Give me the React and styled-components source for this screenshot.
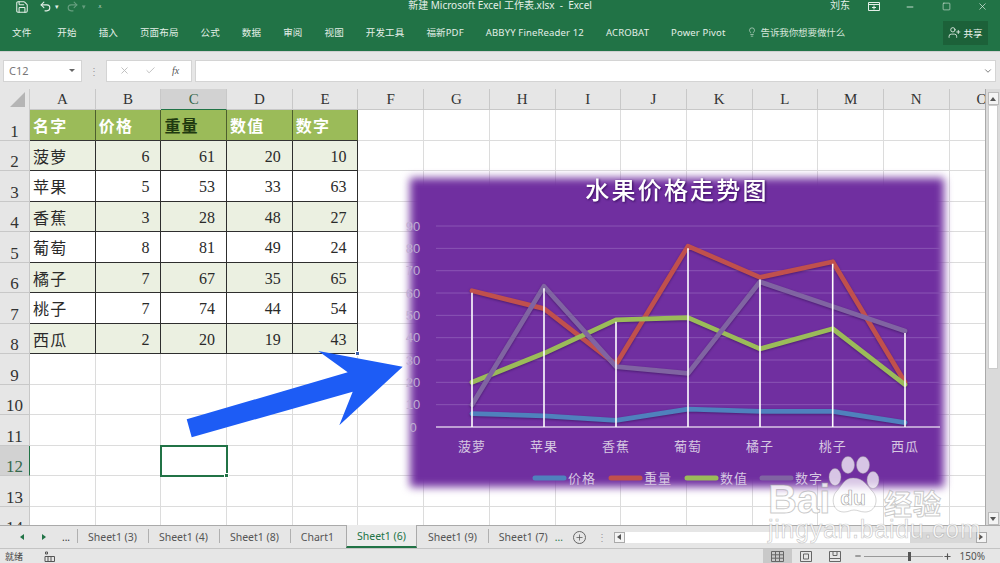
import React from 'react';
import styled, { createGlobalStyle } from 'styled-components';
import { Save, Undo2, Redo2, Lightbulb, UserPlus, X, Minus, Square, Check, ChevronDown, Plus } from 'lucide-react';

const UI = '"Noto Sans","Noto Sans CJK SC",sans-serif';
const SHEET = '"Liberation Serif","Noto Sans CJK SC",serif';
const green = '#217346';

const Global = createGlobalStyle`
  html, body { margin: 0; padding: 0; background: #fff; }
  * { box-sizing: border-box; }
`;
const Page = styled.div`
  position: relative; width: 1000px; height: 563px; overflow: hidden;
  display: flex; flex-direction: column; font-family: ${UI}; background: #e6e6e6;
`;
const Ribbon = styled.header`
  height: 52px; background: ${green}; color: #e4efe8; display: flex; flex-direction: column;
  border-bottom: 1px solid #d0d0d0;
`;
const TitleRow = styled.div`
  height: 13px; display: grid; grid-template-columns: 1fr auto 1fr; align-items: center; font-size: 10px;
`;
const Qat = styled.div`
  display: flex; align-items: center; padding-left: 15px; gap: 2px; height: 13px;
`;
const QatBtn = styled.span`
  display: inline-flex; align-items: center; justify-content: center; height: 13px;
  width: ${p => p.$w || 14}px; margin-left: ${p => p.$ml || 0}px; opacity: ${p => p.$dim ? 0.35 : 1};
  font-size: 7px; line-height: 1;
`;
const Title = styled.div` white-space: pre; line-height: 10px; margin-bottom: 3px; `;
const WinControls = styled.div`
  display: flex; justify-content: flex-end; align-items: center; height: 13px;
`;
const User = styled.span` margin-right: 6px; line-height: 10px; margin-bottom: 3px; `;
const WinBtn = styled.span`
  width: 36px; display: inline-flex; justify-content: center; align-items: center;
`;
const TabRow = styled.nav`
  flex: 1; display: flex; align-items: center; padding: 0 12px; font-size: 9.5px; gap: 22px; white-space: nowrap; letter-spacing: 0.15px;
`;
const RibbonTab = styled.span`
  display: inline-block; margin-right: ${p => p.$mr || 0}px;
`;
const Tell = styled.span`
  display: inline-flex; align-items: center; gap: 3px; color: #d5e5da; letter-spacing: -0.1px;
`;
const Share = styled.button`
  margin-left: auto; width: 45px; height: 24px; margin-top: 1px; background: #1c6139; border: 0; color: #f0f6f2;
  font: 9.5px ${UI}; display: flex; align-items: center; justify-content: center; gap: 2px; padding: 0;
`;
const FormulaBar = styled.div`
  height: 37px; display: flex; align-items: center; padding: 0 4px 0 3px; background: #e6e6e6;
`;
const NameBox = styled.div`
  width: 79px; height: 22px; background: #fff; border: 1px solid #d4d4d4; display: flex; align-items: center; justify-content: space-between;
  padding: 0 3px 0 5px; font-size: 11px; color: #777;
`;
const Caret = styled.span`
  width: 0; height: 0; border-left: 3px solid transparent; border-right: 3px solid transparent; border-top: 3px solid #666; margin-right: 3px;
`;
const Grip = styled.span`
  width: 24px; text-align: center; color: #999; font-size: 10px; line-height: 1; flex: none; margin-left: ${p => p.$ml || 0}px;
`;
const FxBox = styled.div`
  width: 86px; height: 22px; background: #fff; border: 1px solid #d4d4d4; display: flex; align-items: center; justify-content: space-around; padding: 0 4px;
  color: #bbb;
`;
const Fx = styled.i` font: italic 10px "Liberation Serif", serif; color: #555; `;
const Input = styled.div`
  flex: 1; margin-left: 3px; height: 22px; background: #fff; border: 1px solid #d4d4d4; display: flex; align-items: center; justify-content: flex-end; padding-right: 2px; color: #666;
`;
const SheetWrap = styled.div` height: 437px; display: flex; background: #fff; border-bottom: 1px solid #aaa; `;
const Grid = styled.div`
  width: 985px; height: 436px; overflow: hidden; display: grid;
  grid-template-columns: 30px repeat(15, 65.7px);
  grid-template-rows: 21px repeat(14, 30.5px);
  font-family: ${SHEET}; font-size: 16px; color: #222;
`;
const Corner = styled.div`
  background: #e6e6e6; position: relative; border-right: 1px solid #ccc;
  &::after {
    content: ''; position: absolute; right: 4px; bottom: 3px; width: 0; height: 0;
    border-left: 15px solid transparent; border-bottom: 15px solid #b5b5b5;
  }
`;
const ColHead = styled.div`
  background: ${p => p.$on ? '#d2d2d2' : '#e6e6e6'}; border-right: 1px solid #c8c8c8;
  border-bottom: ${p => p.$on ? `1px solid ${green}` : '1px solid #c8c8c8'};
  display: flex; align-items: center; justify-content: center; font-size: 15px; color: ${p => p.$on ? '#37694c' : '#333'}; overflow: hidden; white-space: nowrap;
`;
const RowHead = styled.div`
  background: ${p => p.$on ? '#d2d2d2' : '#e6e6e6'}; border-bottom: 1px solid #c8c8c8;
  border-right: ${p => p.$on ? `1px solid ${green}` : '1px solid #c8c8c8'};
  display: flex; align-items: flex-end; justify-content: center; font-size: 17px; line-height: 1; padding-bottom: 0;
  color: ${p => p.$on ? '#37694c' : '#333'};
`;
const Cell = styled.div`
  position: relative; border-right: 1px solid #dcdcdc; border-bottom: 1px solid #dcdcdc;
`;
const DataCell = styled.div`
  background: ${p => p.$head ? '#9bbb59' : p.$band ? '#ebf0e1' : '#fff'};
  border-right: 1px solid ${p => p.$head ? '#4d5f2d' : '#2e2e2e'}; border-bottom: 1px solid ${p => p.$head ? '#333' : '#2e2e2e'};
  display: flex; align-items: center; justify-content: ${p => p.$num ? 'flex-end' : 'flex-start'};
  padding: ${p => p.$num ? '3px 11px 0 0' : '1px 0 0 3px'}; font-size: 16px; letter-spacing: ${p => p.$num ? 0 : '1.2px'};
  color: ${p => p.$head ? (p.$dark ? '#1f3a10' : '#fff') : '#2a2a2a'}; font-weight: ${p => p.$head ? 700 : 400}; position: relative;
`;
const Handle = styled.span`
  position: absolute; right: -3px; bottom: -3px; width: 5px; height: 5px; background: ${p => p.$c || green}; border: 1px solid #fff; z-index: 1;
`;
const Selected = styled(Cell)`
  outline: 2px solid ${green}; outline-offset: -1px; z-index: 1;
`;
const VScroll = styled.div`
  width: 15px; background: #dadada; border-left: 1px solid #aaa; display: flex; flex-direction: column; align-items: center; padding: 3px 0 0;
`;
const ScrollBtn = styled.div`
  width: 11px; height: 13px; background: #f4f4f4; border: 1px solid #bbb; display: flex; align-items: center; justify-content: center; flex: none;
`;
const Tri = styled.span`
  width: 0; height: 0; border: 3px solid transparent;
  ${p => p.$d === 'up' && 'border-bottom: 4px solid #555; border-top: 0;'}
  ${p => p.$d === 'down' && 'border-top: 4px solid #555; border-bottom: 0;'}
  ${p => p.$d === 'left' && `border-right: 4px solid ${p.$c || '#555'}; border-left: 0;`}
  ${p => p.$d === 'right' && `border-left: 4px solid ${p.$c || '#555'}; border-right: 0;`}
`;
const VThumb = styled.div` width: 10px; height: 264px; background: #fff; border: 1px solid #ccc; flex: none; `;
const VGap = styled.div` flex: 1; `;
const TabBar = styled.div`
  height: 22px; display: flex; align-items: center; font-size: 10.5px; color: #555; background: #e6e6e6;
`;
const NavStart = styled.span`
  width: 22px; display: flex; justify-content: center; flex: none; margin-left: ${p => p.$ml || 0}px;
`;
const NavDots = styled.span`
  width: ${p => p.$w || 22}px; text-align: center; color: ${p => p.$c || '#333'}; font-size: 10px; flex: none;
`;
const SheetTab = styled.div`
  height: 22px; padding: 0 ${p => p.$pr || 11}px 0 11px; display: flex; align-items: center; white-space: nowrap; flex: none;
  color: ${p => p.$on ? green : '#555'}; position: relative;
  ${p => p.$on ? `border-bottom: 2px solid ${green}; background: #ececec; border-left: 1px solid #aaa; border-right: 1px solid #aaa; margin-top: -1px; height: 23px; padding: 0 10px; margin-left: 1px;` : ''}
  ${p => p.$sep ? `&::before { content: ''; position: absolute; left: 0; top: 3px; bottom: 5px; width: 1px; background: #b0b0b0; }` : ''}
`;
const AddBtn = styled.span`
  width: 13px; height: 13px; border-radius: 50%; border: 1px solid #666; margin-left: 10px; display: flex; align-items: center; justify-content: center; flex: none;
`;
const HScroll = styled.div`
  margin-left: auto; margin-right: 14px; width: 373px; height: 11px; background: #d8d8d8; display: flex; justify-content: space-between; flex: none;
`;
const HBtn = styled.div`
  width: 11px; height: 11px; background: #f4f4f4; border: 1px solid #aaa; display: flex; align-items: center; justify-content: center; flex: none;
`;
const HThumb = styled.div` width: 285px; background: #fff; flex: none; margin-right: auto; `;
const Status = styled.footer`
  flex: 1; display: flex; align-items: center; border-top: 1px solid #c4c4c4; font-size: 9px; color: #444; padding-left: 5px; background: #e6e6e6;
`;
const Macro = styled.span` margin-left: 21px; display: inline-flex; `;
const StatusRight = styled.div` margin-left: auto; display: flex; align-items: center; height: 100%; padding-right: 15px; `;
const ViewBtn = styled.span`
  width: 29px; height: 100%; display: flex; align-items: center; justify-content: center; background: ${p => p.$on ? '#c9c9c9' : 'transparent'};
`;
const Slider = styled.div`
  width: 79px; height: 1px; background: #999; margin: 0 0 0 2px; position: relative;
`;
const SliderThumb = styled.span` position: absolute; left: 44px; top: -4px; width: 3px; height: 9px; background: #555; `;
const Pct = styled.span` margin-left: 8px; font-size: 10px; color: #555; `;
const Overlay = styled.div`
  position: absolute; left: ${p => p.$l}px; top: ${p => p.$t}px; width: ${p => p.$w}px; height: ${p => p.$h}px; pointer-events: none;
`;
const ChartGlow = styled.div`
  position: absolute; left: 10px; top: 8px; width: 534px; height: 309px; background: #702fa0; filter: blur(4px);
`;
const ChartSvg = styled.svg`
  position: absolute; left: 0; top: 0; font-family: "Noto Sans CJK SC", sans-serif;
`;
const PawSvg = styled.svg` position: absolute; left: 0; top: 0; `;
const WmLogo = styled.div`
  position: absolute; left: 0; top: 24px; color: rgba(255,255,255,.8);
  font: 700 40px "Liberation Sans", sans-serif; -webkit-text-stroke: 1px rgba(150,150,150,.5); line-height: 1; white-space: nowrap;
`;
const WmCn = styled.span` position: absolute; left: 116px; top: 4px; font: 700 28px "Noto Sans CJK SC", sans-serif; white-space: nowrap; letter-spacing: 1px; -webkit-text-stroke: 1px rgba(150,150,150,.5); `;
const WmUrl = styled.div`
  position: absolute; left: 0; top: 60px; font: 400 25px "Liberation Sans", sans-serif; letter-spacing: 0.7px; color: rgba(255,255,255,.85); -webkit-text-stroke: .7px rgba(150,150,150,.5); white-space: nowrap;
`;

const tabs = ['文件','开始','插入','页面布局','公式','数据','审阅','视图','开发工具','福新PDF','ABBYY FineReader 12','ACROBAT','Power Pivot'];
const cols = 'ABCDEFGHIJKLMNO'.split('');
const head = ['名字','价格','重量','数值','数字'];
const data = [
  ['菠萝',6,61,20,10],['苹果',5,53,33,63],['香蕉',3,28,48,27],['葡萄',8,81,49,24],
  ['橘子',7,67,35,65],['桃子',7,74,44,54],['西瓜',2,20,19,43],
];
const xs = [472, 544, 616, 688, 760, 832.7, 905];
const y = v => 427 - v * 2.233;
const series = [
  { i: 1, c: '#4f81bd', n: '价格' }, { i: 2, c: '#c0504d', n: '重量' },
  { i: 3, c: '#9bbb59', n: '数值' }, { i: 4, c: '#8064a2', n: '数字' },
];
const legendX = [533, 609, 685, 760];

function Chart() {
  return (
    <Overlay $l={400} $t={170} $w={560} $h={330}>
      <ChartGlow />
      <ChartSvg width="560" height="330" viewBox="400 170 560 330">
        <text x="677" y="199" textAnchor="middle" fontSize="24" letterSpacing="2.2" fontWeight="500" fill="#fff" style={{ filter: 'drop-shadow(1px 1px 1px #3a1060)' }}>水果价格走势图</text>
        {[10,20,30,40,50,60,70,80,90].map(v => <line key={v} x1="436" x2="940" y1={y(v)} y2={y(v)} stroke="#8a55b4" strokeWidth="1" />)}
        {[0,10,20,30,40,50,60,70,80,90].map(v => <text key={v} x="413" y={y(v) + 4.5} textAnchor="middle" fontSize="13" fontFamily="Liberation Sans" fill="#bfaed2">{v}</text>)}
        <line x1="436" x2="940" y1="427" y2="427" stroke="#d8c6e6" strokeWidth="1.5" />
        <g fill="none" strokeWidth="4.8" strokeLinejoin="round" strokeLinecap="round" style={{ filter: 'drop-shadow(0 1px 1px rgba(40,10,70,.5))' }}>
          {series.map(s => <polyline key={s.i} stroke={s.c} points={data.map((d, k) => `${xs[k]},${y(d[s.i])}`).join(' ')} />)}
        </g>
        {data.map((d, k) => <line key={k} x1={xs[k]} x2={xs[k]} y1="427" y2={y(Math.max(d[1], d[2], d[3], d[4])) + 2} stroke="#fff" strokeWidth="1.6" />)}
        {data.map((d, k) => <text key={k} x={xs[k]} y="451" textAnchor="middle" fontSize="13" letterSpacing="1" fill="#d6c8e2">{d[0]}</text>)}
        {series.map((s, k) => (
          <g key={s.i}>
            <line x1={legendX[k] + 2} x2={legendX[k] + 31} y1="478" y2="478" stroke={s.c} strokeWidth="5" strokeLinecap="round" />
            <text x={legendX[k] + 35} y="483" fontSize="13" letterSpacing="1" fill="#d6c8e2">{s.n}</text>
          </g>
        ))}
      </ChartSvg>
    </Overlay>
  );
}

function Arrow() {
  return (
    <Overlay $l={180} $t={345} $w={230} $h={100}>
      <svg width="230" height="100" viewBox="180 345 230 100">
        <polygon fill="#1d5cf5" points="186.7,419.3 191.7,437.3 352.7,391.7 339.3,425.3 402.7,366.7 318.3,351 347.7,372.3" />
      </svg>
    </Overlay>
  );
}

function Watermark() {
  return (
    <Overlay $l={768} $t={455} $w={190} $h={100}>
      <PawSvg width="190" height="70" viewBox="768 455 190 70">
        <g fill="rgba(255,255,255,.72)" stroke="rgba(150,150,150,.4)">
          <ellipse cx="848" cy="465" rx="6.5" ry="8.5" /><ellipse cx="863" cy="465" rx="6.5" ry="8.5" />
          <ellipse cx="835" cy="477" rx="6" ry="8.5" /><ellipse cx="873" cy="480" rx="6" ry="8.5" />
          <path d="M853 478c-9 0-11 8-17 14-5 6-4 20 8 20 5 0 6-2 10-2s6 2 11 2c11 0 14-13 8-20-6-6-9-14-20-14z" />
        </g>
        <text x="853" y="505" textAnchor="middle" fontSize="21" fontFamily="Liberation Sans" fontWeight="700" fill="rgba(255,255,255,.7)" stroke="rgba(130,130,130,.7)" strokeWidth=".7">du</text>
      </PawSvg>
      <WmLogo>Bai<WmCn>经验</WmCn></WmLogo>
      <WmUrl>jingyan.baidu.com</WmUrl>
    </Overlay>
  );
}

function MiniIcon({ kind }) {
  const c = '#666';
  if (kind === 'normal') return <svg width="13" height="11" viewBox="0 0 13 11"><path d="M.5.5h12v10H.5zM.5 3.8h12M.5 7.2h12M4.5.5v10M8.5.5v10" fill="none" stroke={c} /></svg>;
  if (kind === 'layout') return <svg width="12" height="11" viewBox="0 0 12 11"><path d="M.5.5h11v10H.5zM3.5 3h5v5h-5z" fill="none" stroke={c} /></svg>;
  return <svg width="12" height="11" viewBox="0 0 12 11"><path d="M.5.5h11v10H.5zM.5 7.5h11M4 .5v4h4v-4" fill="none" stroke={c} /></svg>;
}

export default function App() {
  const rows = Array.from({ length: 14 }, (_, i) => i + 1);
  return (
    <Page>
      <Global />
      <Ribbon>
        <TitleRow>
          <Qat>
            <QatBtn><Save size={14} strokeWidth={1.8} /></QatBtn>
            <QatBtn $ml={7}><Undo2 size={13} strokeWidth={2} /></QatBtn>
            <QatBtn $w={6}>▾</QatBtn>
            <QatBtn $dim $ml={3}><Redo2 size={13} strokeWidth={2} /></QatBtn>
            <QatBtn $dim $w={6}>▾</QatBtn>
            <QatBtn $w={8} $ml={7}>⩡</QatBtn>
          </Qat>
          <Title>新建 Microsoft Excel 工作表.xlsx  -  Excel</Title>
          <WinControls>
            <User>刘东</User>
            <WinBtn><svg width="12" height="9" viewBox="0 0 12 9"><path d="M.5.5h11v8H.5zM.5 2.5h11M6 3.5v4M4 5.5h4" fill="none" stroke="#e4efe8" /></svg></WinBtn>
            <WinBtn><Minus size={10} /></WinBtn>
            <WinBtn><Square size={9} strokeWidth={1.5} /></WinBtn>
            <WinBtn><X size={11} strokeWidth={1.5} /></WinBtn>
          </WinControls>
        </TitleRow>
        <TabRow>
          {tabs.map((t, i) => <RibbonTab key={t} $mr={i === 0 ? 4 : 0}>{t}</RibbonTab>)}
          <Tell><Lightbulb size={10} strokeWidth={1.5} />告诉我你想要做什么</Tell>
          <Share><UserPlus size={13} strokeWidth={1.5} />共享</Share>
        </TabRow>
      </Ribbon>
      <FormulaBar>
        <NameBox>C12<Caret /></NameBox>
        <Grip>⋮</Grip>
        <FxBox><X size={11} /><Check size={11} /><Fx>fx</Fx></FxBox>
        <Input><ChevronDown size={10} /></Input>
      </FormulaBar>
      <SheetWrap>
        <Grid>
          <Corner />
          {cols.map(c => <ColHead key={c} $on={c === 'C'}>{c}</ColHead>)}
          {rows.map(r => (
            <React.Fragment key={r}>
              <RowHead $on={r === 12}>{r}</RowHead>
              {cols.map((c, ci) => {
                if (r === 1 && ci < 5) return <DataCell key={c} $head $dark={ci === 2}>{head[ci]}</DataCell>;
                if (r >= 2 && r <= 8 && ci < 5) {
                  const last = r === 8 && ci === 4;
                  return <DataCell key={c} $band={r % 2 === 0} $num={ci > 0}>{data[r - 2][ci]}{last && <Handle $c="#3a5fa8" />}</DataCell>;
                }
                if (r === 12 && ci === 2) return <Selected key={c}><Handle /></Selected>;
                return <Cell key={c} />;
              })}
            </React.Fragment>
          ))}
        </Grid>
        <VScroll>
          <ScrollBtn><Tri $d="up" /></ScrollBtn>
          <VThumb />
          <VGap />
          <ScrollBtn><Tri $d="down" /></ScrollBtn>
        </VScroll>
      </SheetWrap>
      <TabBar>
        <NavStart $ml={11}><Tri $d="left" $c={green} /></NavStart>
        <NavStart><Tri $d="right" $c={green} /></NavStart>
        <NavDots>...</NavDots>
        <SheetTab $sep>Sheet1 (3)</SheetTab>
        <SheetTab $sep>Sheet1 (4)</SheetTab>
        <SheetTab $sep>Sheet1 (8)</SheetTab>
        <SheetTab $sep>Chart1</SheetTab>
        <SheetTab $on>Sheet1 (6)</SheetTab>
        <SheetTab>Sheet1 (9)</SheetTab>
        <SheetTab $sep $pr={7}>Sheet1 (7)</SheetTab>
        <NavDots $w={8} $c={green}>...</NavDots>
        <AddBtn><Plus size={9} strokeWidth={2} color="#555" /></AddBtn>
        <Grip $ml={4}>⋮</Grip>
        <HScroll>
          <HBtn><Tri $d="left" /></HBtn>
          <HThumb />
          <HBtn><Tri $d="right" /></HBtn>
        </HScroll>
      </TabBar>
      <Status>
        就绪
        <Macro><svg width="11" height="11" viewBox="0 0 11 11"><path d="M1.5 1h2v2h-2zM1 5.5h9.5M1 5.5v5h9.5v-5M4 6v4M7 6v4" fill="none" stroke="#555" /></svg></Macro>
        <StatusRight>
          <ViewBtn $on><MiniIcon kind="normal" /></ViewBtn>
          <ViewBtn><MiniIcon kind="layout" /></ViewBtn>
          <ViewBtn><MiniIcon kind="break" /></ViewBtn>
          <Minus size={8} strokeWidth={3} color="#555" style={{ marginLeft: 4 }} />
          <Slider><SliderThumb /></Slider>
          <Plus size={9} strokeWidth={3} color="#555" />
          <Pct>150%</Pct>
        </StatusRight>
      </Status>
      <Arrow />
      <Chart />
      <Watermark />
    </Page>
  );
}
